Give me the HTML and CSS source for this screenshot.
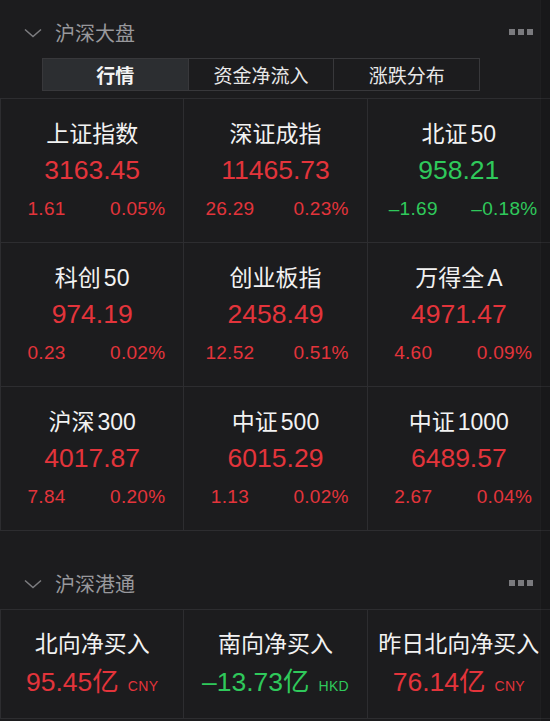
FILE: index.html
```html
<!DOCTYPE html>
<html lang="zh-CN">
<head>
<meta charset="utf-8">
<link rel="stylesheet" href="styles.css">
</head>
<body>
<div class="page">
  <div class="head head-first">
    <svg class="chev" width="18" height="10" viewBox="0 0 18 10"><path d="M1 1.5 L9 8.5 L17 1.5" fill="none" stroke="#7d7d80" stroke-width="1.5"/></svg>
    <span class="head-title">沪深大盘</span>
    <span class="dots"><i></i><i></i><i></i></span>
  </div>
  <div class="tabs">
    <div class="tab active">行情</div>
    <div class="tab">资金净流入</div>
    <div class="tab">涨跌分布</div>
  </div>
  <div class="grid">
    <div class="cell">
      <div class="title">上证指数</div>
      <div class="value up">3163.45</div>
      <div class="sub up"><span>1.61</span><span>0.05%</span></div>
    </div>
    <div class="cell">
      <div class="title">深证成指</div>
      <div class="value up">11465.73</div>
      <div class="sub up"><span>26.29</span><span>0.23%</span></div>
    </div>
    <div class="cell">
      <div class="title">北证<span class="num">50</span></div>
      <div class="value down">958.21</div>
      <div class="sub down"><span>–1.69</span><span>–0.18%</span></div>
    </div>
    <div class="cell">
      <div class="title">科创<span class="num">50</span></div>
      <div class="value up">974.19</div>
      <div class="sub up"><span>0.23</span><span>0.02%</span></div>
    </div>
    <div class="cell">
      <div class="title">创业板指</div>
      <div class="value up">2458.49</div>
      <div class="sub up"><span>12.52</span><span>0.51%</span></div>
    </div>
    <div class="cell">
      <div class="title">万得全<span class="num">A</span></div>
      <div class="value up">4971.47</div>
      <div class="sub up"><span>4.60</span><span>0.09%</span></div>
    </div>
    <div class="cell">
      <div class="title">沪深<span class="num">300</span></div>
      <div class="value up">4017.87</div>
      <div class="sub up"><span>7.84</span><span>0.20%</span></div>
    </div>
    <div class="cell">
      <div class="title">中证<span class="num">500</span></div>
      <div class="value up">6015.29</div>
      <div class="sub up"><span>1.13</span><span>0.02%</span></div>
    </div>
    <div class="cell">
      <div class="title">中证<span class="num">1000</span></div>
      <div class="value up">6489.57</div>
      <div class="sub up"><span>2.67</span><span>0.04%</span></div>
    </div>
  </div>

  <div class="head head-second">
    <svg class="chev" width="18" height="10" viewBox="0 0 18 10"><path d="M1 1.5 L9 8.5 L17 1.5" fill="none" stroke="#7d7d80" stroke-width="1.5"/></svg>
    <span class="head-title">沪深港通</span>
    <span class="dots"><i></i><i></i><i></i></span>
  </div>
  <div class="grid grid-flow">
    <div class="cell cell-flow">
      <div class="title">北向净买入</div>
      <div class="value up">95.45亿<span class="cur">CNY</span></div>
    </div>
    <div class="cell cell-flow">
      <div class="title">南向净买入</div>
      <div class="value down">–13.73亿<span class="cur">HKD</span></div>
    </div>
    <div class="cell cell-flow">
      <div class="title">昨日北向净买入</div>
      <div class="value up">76.14亿<span class="cur">CNY</span></div>
    </div>
  </div>
  <div class="scrollstrip"></div>
</div>
</body>
</html>
```

FILE: styles.css
```css
html, body {
  margin: 0;
  padding: 0;
  background: #1c1c1e;
}
body {
  width: 550px;
  height: 721px;
  overflow: hidden;
  font-family: "Liberation Sans", "Noto Sans CJK SC", sans-serif;
  color: #f2f2f2;
}
.page {
  position: relative;
  width: 550px;
  height: 721px;
}
.head {
  display: flex;
  align-items: center;
  height: 52px;
  box-sizing: content-box;
}
.head-first {
  padding-top: 6px;
}
.head-second {
  padding-top: 26px;
}
.chev {
  margin-left: 24px;
  margin-top: 1px;
}
.head-title {
  margin-left: 13px;
  font-family: "Noto Sans CJK SC", sans-serif;
  font-size: 20px;
  color: #98989c;
}
.dots {
  margin-left: auto;
  margin-right: 17px;
  display: flex;
  gap: 3px;
}
.dots i {
  display: block;
  width: 6px;
  height: 6px;
  background: #7a7a7e;
}
.tabs {
  display: flex;
  margin: 0 0 7px 42px;
  width: 438px;
  height: 33px;
  box-sizing: border-box;
  border: 1px solid #38383b;
}
.tab {
  flex: 1;
  display: flex;
  align-items: center;
  justify-content: center;
  font-family: "Noto Sans CJK SC", sans-serif;
  font-size: 19px;
  color: #e8e8e8;
  border-left: 1px solid #38383b;
}
.tab:first-child {
  border-left: none;
}
.tab.active {
  background: #2c2e31;
  font-weight: 700;
  color: #f4f4f4;
}
.grid {
  display: grid;
  grid-template-columns: repeat(3, 1fr);
  gap: 1px;
  background: #2d2d30;
  padding: 1px 0 1px 1px;
}
.cell {
  background: #1c1c1e;
  height: 143px;
  display: flex;
  flex-direction: column;
  align-items: center;
}
.title {
  margin-top: 20px;
  height: 26px;
  line-height: 26px;
  font-family: "Noto Sans CJK SC", sans-serif;
  font-size: 23px;
  color: #f2f2f2;
}
.title .num {
  font-family: "Liberation Sans", sans-serif;
  margin-left: 3px;
}
.value {
  margin-top: 10px;
  height: 30px;
  line-height: 30px;
  font-size: 26.5px;
}
.sub {
  margin-top: 13px;
  width: 100%;
  display: grid;
  grid-template-columns: 1fr 1fr;
  height: 22px;
  line-height: 22px;
  font-size: 19px;
  letter-spacing: 0.3px;
}
.sub span {
  text-align: center;
}
.up { color: #e3343b; }
.down { color: #2fc95b; }
.cell-flow {
  height: 108px;
}
.cell-flow .title {
  margin-top: 19px;
}
.cell-flow .value {
  margin-top: 12px;
  font-family: "Liberation Sans", "Noto Sans CJK SC", sans-serif;
}
.cur {
  font-size: 14px;
  margin-left: 9px;
  letter-spacing: 0.3px;
}
.scrollstrip {
  position: absolute;
  top: 0;
  right: 0;
  width: 9px;
  height: 721px;
  background: rgba(0, 0, 0, 0.12);
  border-left: 1px solid rgba(255, 255, 255, 0.03);
}
```
